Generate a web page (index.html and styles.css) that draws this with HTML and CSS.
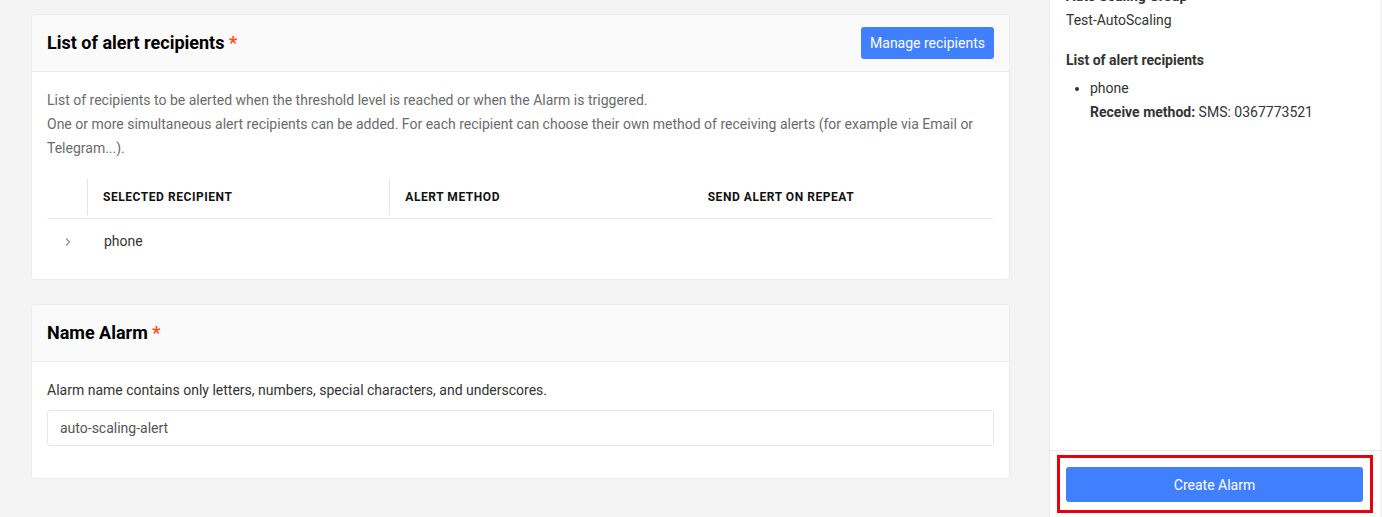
FILE: index.html
```html
<!DOCTYPE html>
<html>
<head>
<meta charset="utf-8">
<link rel="stylesheet" href="styles.css">
</head>
<body>
<div class="page">
  <main class="main">
    <section class="card">
      <div class="card-head">
        <h2 class="card-title">List of alert recipients <span class="req">*</span></h2>
        <button class="btn btn-sm">Manage recipients</button>
      </div>
      <div class="card-body body-a">
        <p class="desc">List of recipients to be alerted when the threshold level is reached or when the Alarm is triggered.<br>One or more simultaneous alert recipients can be added. For each recipient can choose their own method of receiving alerts (for example via Email or Telegram...).</p>
        <div class="table">
          <div class="tr th">
            <div class="cell c-exp"></div>
            <div class="cell c-col divided">Selected recipient</div>
            <div class="cell c-col divided">Alert method</div>
            <div class="cell c-col">Send alert on repeat</div>
          </div>
          <div class="tr td">
            <div class="cell c-exp"><svg class="chev" width="8" height="10" viewBox="0 0 8 10"><path d="M2 1.5 L5.5 5 L2 8.5" fill="none" stroke="#8a8a8a" stroke-width="1.1"/></svg></div>
            <div class="cell c-col row-text">phone</div>
            <div class="cell c-col"></div>
            <div class="cell c-col"></div>
          </div>
        </div>
      </div>
    </section>

    <section class="card">
      <div class="card-head">
        <h2 class="card-title">Name Alarm <span class="req">*</span></h2>
      </div>
      <div class="card-body body-b">
        <p class="desc dark">Alarm name contains only letters, numbers, special characters, and underscores.</p>
        <div class="input">auto-scaling-alert</div>
      </div>
    </section>
  </main>

  <aside class="side">
    <div class="side-content">
      <div class="s-label">Auto Scaling Group</div>
      <div class="s-value">Test-AutoScaling</div>
      <div class="s-label gap">List of alert recipients</div>
      <ul class="s-list">
        <li>phone<br><b>Receive method:</b> SMS: 0367773521</li>
      </ul>
    </div>
    <div class="side-foot">
      <div class="highlight">
        <button class="btn btn-wide">Create Alarm</button>
      </div>
    </div>
  </aside>
</div>
</body>
</html>
```
FILE: styles.css
```css
* { box-sizing: border-box; }
html, body { margin: 0; padding: 0; height: 100%; }
body {
  background: #f4f4f4;
  font-family: Roboto, "Liberation Sans", Arial, sans-serif;
  font-size: 14px;
  color: #333;
  overflow: hidden;
}
.page {
  display: flex;
  height: 517px;
  padding-right: 2px;
}
.main {
  flex: 1;
  padding: 14px 39px 0 31px;
  display: flex;
  flex-direction: column;
  gap: 24px;
}
.card {
  background: #fff;
  border: 1px solid #ebebeb;
  border-radius: 4px;
  overflow: hidden;
}
.card-head {
  height: 57px;
  background: #fafafa;
  border-bottom: 1px solid #ebebeb;
  display: flex;
  align-items: center;
  justify-content: space-between;
  padding: 0 15px;
}
.card-title {
  margin: 0;
  font-size: 18px;
  font-weight: 700;
  color: #000;
  line-height: 24px;
}
.req { color: #ff4a12; }
.btn {
  background: #4080ff;
  color: #fff;
  border: 0;
  border-radius: 3px;
  font-family: inherit;
  font-size: 14px;
  cursor: pointer;
}
.btn-sm {
  height: 32px;
  padding: 0 9px;
}
.card-body {
  padding: 16px 15px 15px;
}
.body-a { padding-bottom: 16px; }
.desc {
  margin: 0;
  line-height: 24px;
  color: #6b6b6b;
}
.desc.dark { color: #333; }
.table { margin-top: 15px; }
.tr {
  display: flex;
  height: 44px;
  align-items: center;
}
.th {
  border-bottom: 1px solid #ededed;
  font-size: 12px;
  font-weight: 700;
  text-transform: uppercase;
  color: #111;
  letter-spacing: 0.55px;
}
.td { height: 44px; color: #333; }
.cell { position: relative; }
.c-exp { width: 40px; display: flex; justify-content: center; padding-left: 1px; }
.c-col { flex: 1; padding-left: 16px; }
.row-text { padding-left: 17px; }
.divided::before {
  content: "";
  position: absolute;
  left: 0;
  top: -11px;
  bottom: -11px;
  width: 1px;
  background: #e4e4e4;
}
.chev { display: block; margin-top: 2px; }
.body-b { padding-bottom: 32px; }
.input {
  margin-top: 8px;
  height: 36px;
  border: 1px solid #e8e8e8;
  border-radius: 3px;
  padding: 0 12px;
  display: flex;
  align-items: center;
  color: #555;
}
.side {
  width: 331px;
  background: #fff;
  border-left: 1px solid #e9e9e9;
  display: flex;
  flex-direction: column;
}
.side-content {
  flex: 1;
  padding: 0 16px;
  margin-top: -16px;
  line-height: 24px;
}
.s-label { font-weight: 700; color: #333; }
.s-label.gap { margin-top: 16px; }
.s-list {
  margin: 4px 0 0;
  padding-left: 24px;
}
.s-list li::marker { font-size: 14px; }
.side-foot {
  border-top: 1px solid #ebebeb;
  padding: 4px 7px 4px 7px;
}
.highlight {
  border: 3px solid #e8000b;
  padding: 9px 7px 8px 6px;
}
.btn-wide {
  width: 100%;
  height: 35px;
  display: block;
}
```
